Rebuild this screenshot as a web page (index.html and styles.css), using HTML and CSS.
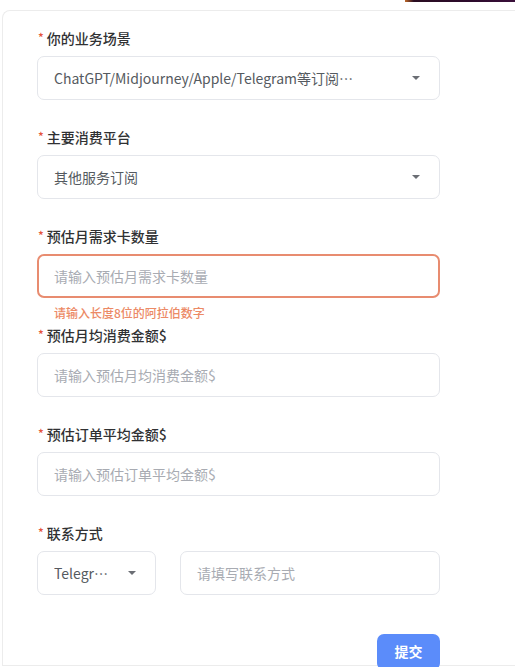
FILE: index.html
```html
<!DOCTYPE html>
<html lang="zh">
<head>
<meta charset="utf-8">
<link rel="stylesheet" href="styles.css">
</head>
<body>
<div class="topbar"><div class="strip"></div></div>
<div class="card">
  <form class="form">
    <div class="field">
      <label class="label"><span class="req">*</span>你的业务场景</label>
      <div class="box select"><span class="val ellip">ChatGPT/Midjourney/Apple/Telegram等订阅…</span><span class="arrow"></span></div>
    </div>
    <div class="field">
      <label class="label"><span class="req">*</span>主要消费平台</label>
      <div class="box select"><span class="val">其他服务订阅</span><span class="arrow"></span></div>
    </div>
    <div class="field err">
      <label class="label"><span class="req">*</span>预估月需求卡数量</label>
      <div class="box input error"><span class="ph">请输入预估月需求卡数量</span></div>
      <div class="errmsg">请输入长度8位的阿拉伯数字</div>
    </div>
    <div class="field">
      <label class="label"><span class="req">*</span>预估月均消费金额$</label>
      <div class="box input"><span class="ph">请输入预估月均消费金额$</span></div>
    </div>
    <div class="field">
      <label class="label"><span class="req">*</span>预估订单平均金额$</label>
      <div class="box input"><span class="ph">请输入预估订单平均金额$</span></div>
    </div>
    <div class="field">
      <label class="label"><span class="req">*</span>联系方式</label>
      <div class="row">
        <div class="box select small"><span class="val">Telegr…</span><span class="arrow"></span></div>
        <div class="box input grow"><span class="ph">请填写联系方式</span></div>
      </div>
    </div>
    <div class="actions"><button type="button" class="btn">提交</button></div>
  </form>
</div>
</body>
</html>
```
FILE: styles.css
```css
html, body {
  margin: 0;
  padding: 0;
  background: #fff;
  overflow: hidden;
  height: 667px;
}
body {
  font-family: "Noto Sans CJK SC", "Noto Sans", sans-serif;
  color: #303133;
}
.topbar {
  display: flex;
  justify-content: flex-end;
  height: 2px;
}
.strip {
  width: 110px;
  height: 2px;
  background: linear-gradient(90deg, #c06a2a 0%, #2a0d22 8%, #2c0a2c 60%, #3a0f3a 100%);
}
.card {
  margin-top: 8px;
  margin-left: 2px;
  width: calc(100% - 2px);
  height: 656px;
  box-sizing: border-box;
  border: 1px solid #ececec;
  border-right: none;
  border-radius: 8px 0 0 0;
}
.form {
  width: 403px;
  margin-left: 34px;
  padding-top: 17px;
}
.field {
  margin-bottom: 27px;
}
.field.err {
  margin-bottom: 4px;
}
.label {
  display: block;
  font-size: 14px;
  font-weight: 500;
  line-height: 20px;
  color: #303133;
  margin-bottom: 8px;
}
.req {
  color: #e5533a;
  font-size: 12px;
  margin-right: 3px;
  margin-left: 1px;
  vertical-align: top;
  line-height: 18px;
}
.box {
  box-sizing: border-box;
  height: 44px;
  border: 1px solid #e4e6eb;
  border-radius: 7px;
  display: flex;
  align-items: center;
  padding: 0 16px 0 16px;
  font-size: 14px;
  background: #fff;
}
.box.error {
  border: 2px solid #e88c70;
  padding-left: 15px;
}
.val {
  color: #555a60;
  flex: 1;
  white-space: nowrap;
  overflow: hidden;
}
.ph {
  color: #a8abb2;
}
.arrow {
  width: 0;
  height: 0;
  border-left: 4px solid transparent;
  border-right: 4px solid transparent;
  border-top: 4px solid #6b6e74;
  margin-right: 3px;
}
.errmsg {
  color: #ec8a66;
  font-size: 12px;
  font-weight: 500;
  line-height: 16px;
  margin-top: 7px;
  padding-left: 17px;
}
.row {
  display: flex;
  gap: 24px;
}
.small {
  width: 119px;
  flex: none;
}
.grow {
  flex: 1;
}
.actions {
  display: flex;
  justify-content: flex-end;
  margin-top: 39px;
}
.btn {
  width: 63px;
  height: 36px;
  border: none;
  border-radius: 7px;
  background: #5b8cfa;
  color: #fff;
  font-family: "Noto Sans CJK SC", sans-serif;
  font-size: 14px;
  font-weight: 700;
  padding: 0;
  padding-bottom: 3px;
}
```
